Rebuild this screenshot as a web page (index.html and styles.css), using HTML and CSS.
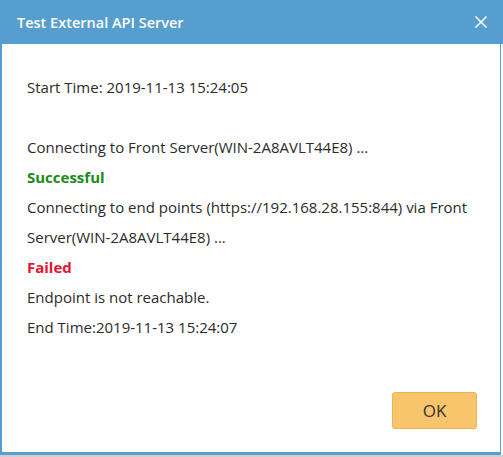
FILE: index.html
```html
<!DOCTYPE html>
<html>
<head>
<meta charset="utf-8">
<link rel="stylesheet" href="styles.css">
</head>
<body>
<div class="dialog">
  <div class="header">
    <span class="title">Test External API Server</span>
    <svg class="close" width="14" height="14" viewBox="0 0 14 14"><path d="M1.5 1.5 L12.5 12.5 M12.5 1.5 L1.5 12.5" stroke="#fff" stroke-width="1.6" fill="none"/></svg>
  </div>
  <div class="body">
    <div class="log">
      <p>Start Time: 2019-11-13 15:24:05</p>
      <p class="blank">&nbsp;</p>
      <p>Connecting to Front Server(WIN-2A8AVLT44E8) ...</p>
      <p class="ok">Successful</p>
      <p>Connecting to end points (https://192.168.28.155:844) via Front Server(WIN-2A8AVLT44E8) ...</p>
      <p class="fail">Failed</p>
      <p>Endpoint is not reachable.</p>
      <p>End Time:2019-11-13 15:24:07</p>
    </div>
    <div class="footer">
      <button class="btn">OK</button>
    </div>
  </div>
</div>
<div class="backdrop"></div>
</body>
</html>
```

FILE: styles.css
```css
html, body {
  margin: 0;
  padding: 0;
  background: #fff;
  font-family: "Open Sans", "DejaVu Sans", sans-serif;
}
.dialog {
  width: 503px;
}
.header {
  height: 44px;
  background: #569ecf;
  display: flex;
  align-items: center;
  justify-content: space-between;
  padding: 0 15px 0 17px;
  box-sizing: border-box;
}
.title {
  color: #fff;
  font-size: 14.5px;
  font-weight: 600;
}
.close {
  display: block;
}
.body {
  width: 501px;
  height: 411px;
  box-sizing: border-box;
  border-left: 2px solid #569ecf;
  border-right: 1px solid #569ecf;
  border-bottom: 3px solid #569ecf;
  background: #fff;
  display: flex;
  flex-direction: column;
  padding: 28px 23px 23px 25px;
}
.log p {
  margin: 0;
  font-size: 15px;
  line-height: 30px;
  color: #2b2b2b;
}
.log .ok {
  color: #1a8a1a;
  font-weight: 700;
}
.log .fail {
  color: #e8132d;
  font-weight: 700;
}
.footer {
  margin-top: auto;
  display: flex;
  justify-content: flex-end;
}
.btn {
  width: 85px;
  height: 37px;
  background: #f8c46c;
  border: 1px solid #eeb255;
  border-radius: 3px;
  font-family: "Open Sans", "DejaVu Sans", sans-serif;
  font-size: 17px;
  color: #333;
  padding: 0;
}
.backdrop {
  height: 2px;
  background: #cfcfcf;
}
```
